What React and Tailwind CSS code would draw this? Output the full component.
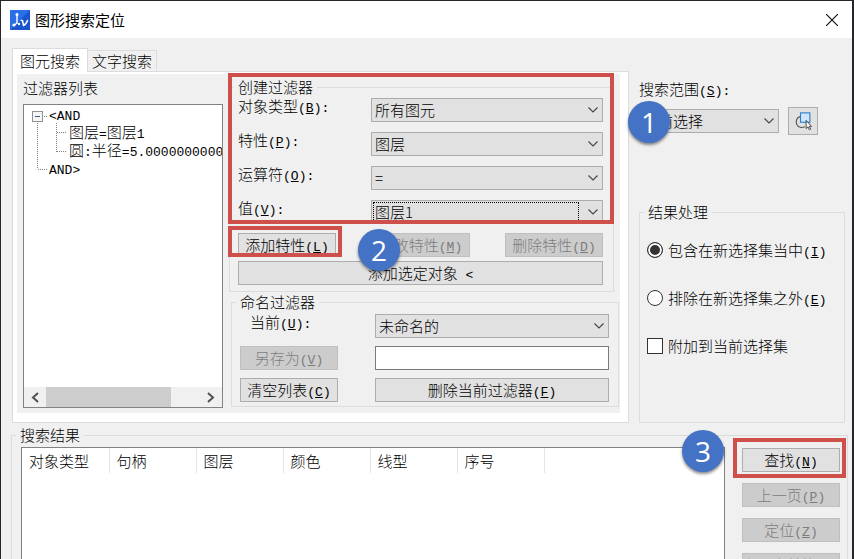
import React, { useState } from 'react';

const columns = ['对象类型', '句柄', '图层', '颜色', '线型', '序号'];

const resultActions = [
  { text: '查找', hotkey: 'N', disabled: false },
  { text: '上一页', hotkey: 'P', disabled: true },
  { text: '定位', hotkey: 'Z', disabled: true },
  { text: '上一步替换', hotkey: 'A', disabled: true },
];

// Half-width characters
function Latin({ children }) {
  return (
    <span className="whitespace-pre font-['Liberation_Mono','Noto_Sans_CJK_SC',monospace] text-[13px] font-normal leading-none">
      {children}
    </span>
  );
}

function Caption({ text, hotkey, colon }) {
  return (
    <>
      {text}
      <Latin>
        (<u className="underline-offset-1">{hotkey}</u>){colon ? ':' : ''}
      </Latin>
    </>
  );
}

function Button({ disabled, className = '', children }) {
  return (
    <button
      type="button"
      disabled={disabled}
      className={`flex h-6 items-center justify-center whitespace-nowrap border border-[#adadad] bg-[#e1e1e1] text-black disabled:border-[#bfbfbf] disabled:bg-[#cccccc] disabled:text-[#7c7c7c] ${className}`}
    >
      <span>{children}</span>
    </button>
  );
}

function Select({ id, options, label, focused, className = '' }) {
  const [value, setValue] = useState(options[0]);
  return (
    <div className={`relative ${className}`}>
      <select
        id={id}
        aria-label={label}
        value={value}
        onChange={(e) => setValue(e.target.value)}
        className="block h-6 w-full appearance-none border border-[#adadad] bg-[#e1e1e1] pl-[3px] pr-6 leading-5 text-black outline-none"
      >
        {options.map((option) => (
          <option key={option}>{option}</option>
        ))}
      </select>
      {focused && (
        <span className="pointer-events-none absolute inset-y-0.5 left-0.5 right-6 border border-dotted border-black" />
      )}
      <svg className="pointer-events-none absolute right-1 top-2 h-2 w-3" viewBox="0 0 12 8" fill="none" stroke="#444" strokeWidth="1.1">
        <path d="M1.5 1.5 6 6l4.500-4.500" />
      </svg>
    </div>
  );
}

function Group({ title, className = '', children }) {
  return (
    <fieldset className={`min-w-0 border border-[#dcdcdc] ${className}`}>
      <legend className="ml-1 px-1 leading-[18px]">{title}</legend>
      {children}
    </fieldset>
  );
}

function Step({ number, className }) {
  return (
    <span
      className={`absolute z-20 flex size-[42px] items-center justify-center rounded-full bg-[#4472c4] font-['Open_Sans',sans-serif] text-[28px] font-medium leading-none text-white shadow-[0_2px_3px_rgba(0,0,0,0.45)] ${className}`}
    >
      {number}
    </span>
  );
}

function TitleBar() {
  return (
    <header className="flex h-[37px] shrink-0 items-center bg-white pl-[9px] pr-2.5">
      <svg className="size-5" viewBox="0 0 20 20">
        <rect width="20" height="20" fill="#2a6fe6" />
        <path d="M0 20 20 0v20z" fill="#1a55cf" />
        <g fill="none" stroke="#fff" strokeLinecap="round" strokeLinejoin="round">
          <path d="M7 5v8" strokeWidth="1.400" />
          <path d="M7 13 4.500 15" strokeWidth="1.300" />
          <path d="M11 10.500h1.500l1 5q2.500-1 4-5" strokeWidth="1.500" />
        </g>
        <circle cx="7" cy="4.500" r="1.500" fill="#fff" />
        <circle cx="4" cy="15" r="1.600" fill="#fff" />
        <circle cx="9" cy="14" r="1.200" fill="#fff" />
      </svg>
      <h1 className="ml-[5px] flex-1 font-normal">图形搜索定位</h1>
      <button type="button" aria-label="关闭" className="p-1">
        <svg className="size-3" viewBox="0 0 12 12" stroke="#111" strokeWidth="1.200">
          <path d="M0 0l12 12M12 0 0 12" />
        </svg>
      </button>
    </header>
  );
}

function FilterTree() {
  return (
    <div className="flex min-h-0 flex-1 flex-col border border-[#828282] bg-white">
      <div className="relative flex-1 overflow-hidden">
        <svg className="absolute left-2 top-1 h-[68px] w-9" viewBox="0 0 36 68" fill="none">
          <g stroke="#808080" strokeDasharray="1 1">
            <path d="M5.500 14v46M6 60.500h10M12 7.500h4M24.500 14v29M25 23.500h9M25 42.500h9" />
          </g>
          <rect x="0.500" y="2.500" width="10" height="10" fill="#f5f5f5" stroke="#919191" />
          <path d="M3 7.500h5" stroke="#3c5a96" />
        </svg>
        <ul className="whitespace-nowrap pl-[25px] leading-[18px]">
          <li>
            <Latin>{'<AND'}</Latin>
            <ul className="pl-5">
              <li>
                图层<Latin>=</Latin>图层<Latin>1</Latin>
              </li>
              <li>
                圆<Latin>:</Latin>半径<Latin>=5.0000000000</Latin>
              </li>
            </ul>
          </li>
          <li>
            <Latin>{'AND>'}</Latin>
          </li>
        </ul>
      </div>
      <div className="flex h-5 items-center bg-[#f0f0f0]">
        <button type="button" aria-label="向左滚动" className="flex w-[22px] justify-center">
          <svg className="h-[11px] w-2" viewBox="0 0 8 11" fill="none" stroke="#505050" strokeWidth="2">
            <path d="M7 1 2 5.500 7 10" />
          </svg>
        </button>
        <div className="flex h-full flex-1">
          <div className="w-[81%] bg-[#cdcdcd]" />
        </div>
        <button type="button" aria-label="向右滚动" className="flex w-[22px] justify-center">
          <svg className="h-[11px] w-2" viewBox="0 0 8 11" fill="none" stroke="#505050" strokeWidth="2">
            <path d="M1 1 6 5.500 1 10" />
          </svg>
        </button>
      </div>
    </div>
  );
}

function FieldRow({ id, text, hotkey, options, focused }) {
  return (
    <div className="flex items-start">
      <label htmlFor={id} className="w-[133px] shrink-0 leading-4">
        <Caption text={text} hotkey={hotkey} colon />
      </label>
      <Select id={id} options={options} focused={focused} className="flex-1" />
    </div>
  );
}

function CreateFilter() {
  return (
    <div className="relative mr-[5px]">
      <Group title="创建过滤器" className="-ml-0.5">
        <div className="flex flex-col gap-[10px] pb-[6px] pl-2 pr-[10px] pt-0.5">
          <FieldRow id="type" text="对象类型" hotkey="B" options={['所有图元']} />
          <FieldRow id="property" text="特性" hotkey="P" options={['图层']} />
          <FieldRow id="operator" text="运算符" hotkey="O" options={['=']} />
          <FieldRow id="value" text="值" hotkey="V" options={['图层1']} focused />
          <div className="-mt-px flex justify-between">
            <Button className="w-[98px]">
              <Caption text="添加特性" hotkey="L" />
            </Button>
            <Button className="w-[98px]" disabled>
              <Caption text="修改特性" hotkey="M" />
            </Button>
            <Button className="w-[98px]" disabled>
              <Caption text="删除特性" hotkey="D" />
            </Button>
          </div>
          <Button className="-mt-1.5 w-full">
            添加选定对象<Latin>{' <'}</Latin>
          </Button>
        </div>
      </Group>
      <div className="pointer-events-none absolute -left-[3px] -right-0 -top-[5px] z-10 h-[151px] border-4 border-[#cf4f4a]" />
      <div className="pointer-events-none absolute -left-[3px] top-[148px] z-10 h-[31px] w-[114px] border-4 border-[#cf4f4a]" />
      <Step number="2" className="left-[127px] top-[151px]" />
    </div>
  );
}

function NamedFilter() {
  const [name, setName] = useState('');
  return (
    <Group title="命名过滤器" className="mt-px">
      <div className="grid grid-cols-[98px_1fr] gap-x-[37px] gap-y-2 pb-1 pl-2 pr-[9px] pt-[3px]">
        <label htmlFor="current" className="pl-[10px] leading-4">
          <Caption text="当前" hotkey="U" colon />
        </label>
        <Select id="current" options={['未命名的']} />
        <Button disabled>
          <Caption text="另存为" hotkey="V" />
        </Button>
        <input
          type="text"
          aria-label="过滤器名称"
          value={name}
          onChange={(e) => setName(e.target.value)}
          className="h-6 w-full border border-[#7a7a7a] bg-white px-1 outline-none"
        />
        <Button>
          <Caption text="清空列表" hotkey="C" />
        </Button>
        <Button>
          <Caption text="删除当前过滤器" hotkey="F" />
        </Button>
      </div>
    </Group>
  );
}

function SearchScope() {
  return (
    <div className="relative pt-2">
      <label htmlFor="scope" className="block leading-[18px]">
        <Caption text="搜索范围" hotkey="S" colon />
      </label>
      <div className="mt-[9px] flex items-center">
        <Select id="scope" options={['当前选择']} className="w-[140px]" />
        <button
          type="button"
          aria-label="选择对象"
          className="ml-[9px] flex h-7 w-[30px] items-center justify-center border border-[#adadad] bg-[#e1e1e1]"
        >
          <svg className="size-5" viewBox="0 0 16 16" fill="none">
            <path d="M5.500 4.500a4.500 4.500 0 1 0 4 8" stroke="#555" strokeWidth=".9" />
            <rect x="6" y="1.500" width="7.500" height="7.500" fill="#cfe6fa" stroke="#2f80c8" strokeWidth=".9" />
            <path d="M10.500 7.500v6.500l1.500-1.300 1.100 2.300 1-.5-1.100-2.200h1.800z" fill="#fff" stroke="#333" strokeWidth=".7" />
          </svg>
        </button>
      </div>
      <Step number="1" className="-left-[11px] top-[29px]" />
    </div>
  );
}

function ResultMode() {
  const [mode, setMode] = useState('include');
  const [append, setAppend] = useState(false);
  const radio =
    'size-4 shrink-0 appearance-none rounded-full border border-[#333] bg-white checked:bg-[#333] checked:shadow-[inset_0_0_0_2px_white]';
  return (
    <Group title="结果处理" className="flex-1">
      <div className="flex flex-col gap-[30px] whitespace-nowrap pl-[7px] pt-5 leading-[18px]">
        <label className="flex items-center gap-[5px]">
          <input type="radio" name="mode" className={radio} checked={mode === 'include'} onChange={() => setMode('include')} />
          <span>
            <Caption text="包含在新选择集当中" hotkey="I" />
          </span>
        </label>
        <label className="flex items-center gap-[5px]">
          <input type="radio" name="mode" className={radio} checked={mode === 'exclude'} onChange={() => setMode('exclude')} />
          <span>
            <Caption text="排除在新选择集之外" hotkey="E" />
          </span>
        </label>
        <label className="flex items-center gap-[5px]">
          <input
            type="checkbox"
            className="size-4 shrink-0 appearance-none border border-[#333] bg-white checked:bg-[#333]"
            checked={append}
            onChange={(e) => setAppend(e.target.checked)}
          />
          附加到当前选择集
        </label>
      </div>
    </Group>
  );
}

function Results() {
  return (
    <Group title="搜索结果" className="mr-1 mt-[3px]">
      <div className="flex pl-[9px] pr-[7px] pt-[3px]">
        <div className="h-40 min-w-0 flex-1 border border-[#828282] bg-white">
          <table className="table-fixed border-collapse">
            <thead>
              <tr>
                {columns.map((column) => (
                  <th key={column} className="h-[25px] w-[87px] border-r border-[#e5e5e5] pl-[7px] text-left font-light">
                    {column}
                  </th>
                ))}
              </tr>
            </thead>
          </table>
        </div>
        <div className="relative ml-[17px] flex w-[98px] flex-col gap-[11px] pt-px">
          {resultActions.map((action) => (
            <Button key={action.text} disabled={action.disabled}>
              <Caption text={action.text} hotkey={action.hotkey} />
            </Button>
          ))}
          <div className="pointer-events-none absolute -left-[9px] -right-[6px] -top-[9px] h-10 border-4 border-[#cf4f4a]" />
          <Step number="3" className="-left-[60px] -top-[17px]" />
        </div>
      </div>
    </Group>
  );
}

function App() {
  return (
    <div className="flex h-screen flex-col overflow-hidden border-l border-r-2 border-t border-[#26262b] bg-[#f0f0f0] font-['Noto_Sans_CJK_SC',sans-serif] text-[15px] font-light leading-5 text-black">
      <TitleBar />
      <main className="pl-[10px] pt-[10px]">
        <div className="flex pr-[7px]">
          <div className="ml-px flex min-w-0 flex-1 flex-col">
            {/* Tabs */}
            <div role="tablist" className="flex items-end">
              <button type="button" role="tab" aria-selected="true" className="relative z-10 -mb-px h-6 border border-b-0 border-[#dcdcdc] bg-white px-[7px] leading-5">
                图元搜索
              </button>
              <button type="button" role="tab" aria-selected="false" className="h-[21px] border border-b-0 border-l-0 border-[#dcdcdc] px-1 leading-5">
                文字搜索
              </button>
            </div>
            <div role="tabpanel" className="border border-[#dcdcdc] bg-white pb-[9px] pl-1 pr-2 pt-0.5">
              <div className="flex bg-[#f0f0f0] pl-1.5">
                <div className="flex w-[200px] shrink-0 flex-col pb-[5px] pt-[5px]">
                  <h2 className="mb-[7px] font-light leading-[18px]">过滤器列表</h2>
                  <FilterTree />
                </div>
                <div className="ml-2 min-w-0 flex-1 pb-1.5 pr-px pt-1">
                  <CreateFilter />
                  <NamedFilter />
                </div>
              </div>
            </div>
          </div>
          <div className="ml-[10px] flex w-[206px] shrink-0 flex-col pt-6">
            <div className="h-[131px]">
              <SearchScope />
            </div>
            <ResultMode />
          </div>
        </div>
        <Results />
      </main>
    </div>
  );
}

export default App;
